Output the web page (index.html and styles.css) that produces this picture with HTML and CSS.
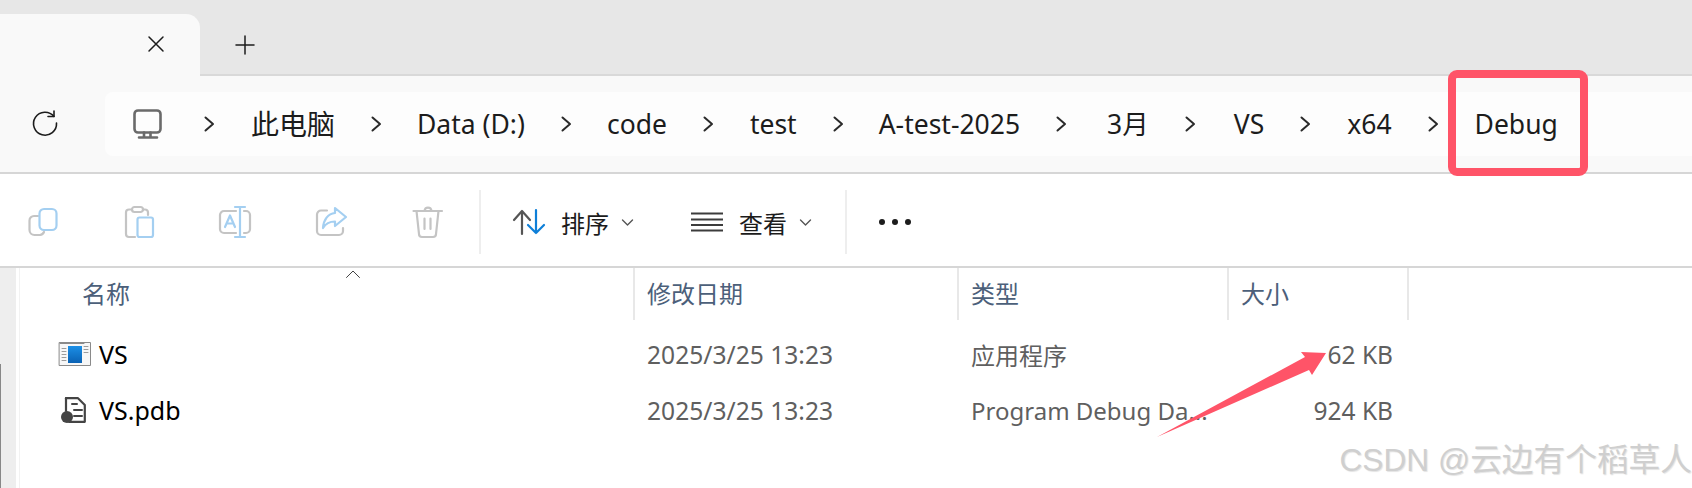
FILE: index.html
```html
<!DOCTYPE html>
<html lang="zh">
<head>
<meta charset="utf-8">
<title>Debug</title>
<link rel="stylesheet" href="styles.css">
</head>
<body>
<div class="window">
  <header class="tabstrip">
    <div class="tab">
      <svg class="ico-close" viewBox="0 0 16 16"><path d="M1 1 15 15M15 1 1 15"/></svg>
    </div>
    <svg class="ico-plus" viewBox="0 0 20 20"><path d="M10 1V19M1 10H19"/></svg>
  </header>
  <nav class="addressrow">
    <svg class="ico-refresh" viewBox="0 0 26 26"><path d="M22 6.500A11.500 11.500 0 1 0 24.500 13"/><path d="M22 1V6.500H16"/></svg>
    <div class="addressbar">
      <svg class="ico-pc" viewBox="0 0 30 30"><rect x="1.500" y="1.500" width="26" height="22" rx="3.500"/><path d="M11 23.500V28M17.500 23.500V28M6 28.500H24"/></svg>
      <svg class="chev" viewBox="0 0 11 16"><path d="M1.500 1.500 9 8 1.500 14.500"/></svg>
      <span class="cjk">此电脑</span>
      <svg class="chev" viewBox="0 0 11 16"><path d="M1.500 1.500 9 8 1.500 14.500"/></svg>
      <span class="back">Data (D:)</span>
      <svg class="chev" viewBox="0 0 11 16"><path d="M1.500 1.500 9 8 1.500 14.500"/></svg>
      <span class="back">code</span>
      <svg class="chev" viewBox="0 0 11 16"><path d="M1.500 1.500 9 8 1.500 14.500"/></svg>
      <span>test</span>
      <svg class="chev" viewBox="0 0 11 16"><path d="M1.500 1.500 9 8 1.500 14.500"/></svg>
      <span class="back">A-test-2025</span>
      <svg class="chev" viewBox="0 0 11 16"><path d="M1.500 1.500 9 8 1.500 14.500"/></svg>
      <span class="month">3月</span>
      <svg class="chev" viewBox="0 0 11 16"><path d="M1.500 1.500 9 8 1.500 14.500"/></svg>
      <span class="fwd">VS</span>
      <svg class="chev" viewBox="0 0 11 16"><path d="M1.500 1.500 9 8 1.500 14.500"/></svg>
      <span>x64</span>
      <svg class="chev" viewBox="0 0 11 16"><path d="M1.500 1.500 9 8 1.500 14.500"/></svg>
      <span>Debug</span>
    </div>
  </nav>
  <section class="toolbar">
    <div class="tools">
      <svg class="tool" viewBox="0 0 32 32"><path class="g" d="M12 10H8A4.500 4.500 0 0 0 3.500 14.500V24A5 5 0 0 0 8.500 29H14A5 5 0 0 0 18 26"/><rect class="b" x="13.500" y="3" width="17" height="21" rx="4.500"/></svg>
      <svg class="tool" viewBox="0 0 32 32"><path class="g" d="M10 3.500H7A3 3 0 0 0 4 6.500V28A3 3 0 0 0 7 31H13M26 9V6.500A3 3 0 0 0 23 3.500H21"/><rect class="g" x="10" y="1" width="11" height="5" rx="2.500"/><rect class="b" x="15.500" y="11.500" width="15.500" height="19.500" rx="2"/></svg>
      <svg class="tool" viewBox="0 0 32 32"><path class="g" d="M18 5H6A4 4 0 0 0 2 9V23A4 4 0 0 0 6 27H18M26 5H28A4 4 0 0 1 32 9V23A4 4 0 0 1 28 27H26"/><path class="b" d="M7 21 12 9.500 17 21M8.500 17.500H15.500M22 1V31M17 1H27M17 31H27"/></svg>
      <svg class="tool" viewBox="0 0 32 32"><path class="g" d="M13 4.500H7A4 4 0 0 0 3 8.500V25A4 4 0 0 0 7 29H25A4 4 0 0 0 29 25V22"/><path class="b" d="M21 2 32 11 21 20V15.500C16 15.500 12 17 9 22 9.500 14 14 7.500 21 7Z"/></svg>
      <svg class="tool" viewBox="0 0 32 32"><path class="g" d="M3.500 5H32M14.500 5C15 .5 21 .5 21.500 5M6.500 5 9 28A3 3 0 0 0 12 31H23A3 3 0 0 0 26 28L28.500 5M14.500 12.500V23M20.500 12.500V23"/></svg>
    </div>
    <div class="sep"></div>
    <div class="menu sort">
      <svg class="ico-sort" viewBox="0 0 32 24"><path class="d" d="M9 24V1M1 10 9 1 17 10"/><path class="s" d="M23 0V23M15 15 23 23 31 15"/></svg>
      <span>排序</span>
      <svg class="caret" viewBox="0 0 11 7"><path d="M.5 1 5.500 6 10.500 1"/></svg>
    </div>
    <div class="menu view">
      <svg class="ico-list" viewBox="0 0 32 20"><path d="M0 1.500H32M0 7.500H32M0 13H32M0 18.500H32"/></svg>
      <span>查看</span>
      <svg class="caret" viewBox="0 0 11 7"><path d="M.5 1 5.500 6 10.500 1"/></svg>
    </div>
    <div class="sep sep2"></div>
    <div class="more"><i></i><i></i><i></i></div>
  </section>
  <main class="content">
    <aside class="pane"></aside>
    <div class="list">
      <div class="row head">
        <div class="c name">名称<svg class="sortup" viewBox="0 0 14 8"><path d="M.5 7.500 7 1 13.500 7.500"/></svg></div>
        <div class="c date">修改日期</div>
        <div class="c type">类型</div>
        <div class="c size">大小</div>
      </div>
      <div class="row file first">
        <div class="c name">
          <svg class="ico-exe" viewBox="0 0 32 24"><defs><linearGradient id="exeBlue" x1="0" y1="0" x2="0" y2="1"><stop offset="0" stop-color="#1c8fe6"/><stop offset="1" stop-color="#0a62b4"/></linearGradient></defs><rect x=".5" y=".5" width="31" height="23" fill="#f7f7f7" stroke="#8a8a8a"/><path d="M1 1.500H25" stroke="#8a8a8a"/><rect x="9" y="4" width="14" height="17" fill="url(#exeBlue)"/><path d="M3 6.500H7M3 9.500H7M3 12.500H7M3 15.500H7M3 18.500H7M25 4.500H29M25 7.500H29M25 10.500H29" stroke="#9c9c9c"/></svg>
          <b>VS</b>
        </div>
        <div class="c date">2025/3/25 13:23</div>
        <div class="c type">应用程序</div>
        <div class="c size">62 KB</div>
      </div>
      <div class="row file">
        <div class="c name">
          <svg class="ico-pdb" viewBox="0 0 32 26"><path d="M7 1.200H19L25.800 8V24.800H10" stroke="#444" stroke-width="2.200"/><path d="M7 14V1.200" stroke="#444" stroke-width="2.200"/><path d="M13 7H18M15 13H23M15 19H23" stroke="#444" stroke-width="2"/><circle cx="8" cy="20" r="6" fill="#444"/></svg>
          <b>VS.pdb</b>
        </div>
        <div class="c date">2025/3/25 13:23</div>
        <div class="c type">Program Debug Da...</div>
        <div class="c size">924 KB</div>
      </div>
    </div>
  </main>
  <div class="redbox"></div>
  <svg class="arrow" viewBox="0 0 200 110"><path d="M7 97 155 17 151 12 176 13 162 35 159 30Z"/></svg>
  <div class="mark">CSDN @云边有个稻草人</div>
</div>
</body>
</html>
```
FILE: styles.css
```css
* { box-sizing: border-box; }
html, body { margin: 0; padding: 0; background: #fff; }
.window {
  position: relative; width: 1692px; height: 488px; overflow: hidden;
  font-family: "Noto Sans", "Noto Sans CJK SC", sans-serif;
  color: #1c1c1c;
}
svg { display: block; flex: none; fill: none; stroke-linecap: round; stroke-linejoin: round; overflow: visible; }

.tabstrip { height: 76px; background: #e7e7e7; border-bottom: 2px solid #d9d9d9; padding-top: 14px; display: flex; position: relative; }
.tab { width: 200px; height: 62px; background: #f9f9f9; border-radius: 0 14px 0 0; display: flex; align-items: flex-start; justify-content: flex-end; padding: 22px 36px 0 0; }
.ico-close { width: 16px; height: 16px; stroke: #1c1c1c; stroke-width: 1.5; }
.ico-plus { width: 20px; height: 20px; margin: 21px 0 0 35px; stroke: #1c1c1c; stroke-width: 1.5; }

.addressrow { height: 98px; background: #f9f9f9; border-bottom: 2px solid #d6d6d6; display: flex; align-items: flex-start; padding: 16px 0 0 32px; }
.ico-refresh { width: 26px; height: 26px; margin: 18px 47px 0 0; stroke: #1c1c1c; stroke-width: 1.6; }
.addressbar { flex: 1; height: 64px; background: #fdfdfd; border-radius: 8px 0 0 8px; display: flex; align-items: center; gap: 36px; padding-left: 28px; font-size: 26.5px; }
.addressbar span { white-space: nowrap; line-height: 36px; }
.addressbar .cjk { font-size: 28px; }
.addressbar .back { margin-left: -1px; }
.addressbar .month { margin-left: 4px; }
.addressbar .fwd { margin-left: 2px; }
.ico-pc { width: 30px; height: 30px; stroke: #6a6a6a; stroke-width: 2.6; margin-right: 5px; }
.chev { width: 11px; height: 16px; stroke: #2a2a2a; stroke-width: 2; }

.toolbar { height: 94px; background: #fff; border-bottom: 2px solid #d6d6d6; display: flex; align-items: center; padding: 4px 0 0 26px; }
.tools { display: flex; gap: 64px; }
.tool { width: 32px; height: 32px; stroke-width: 2.2; }
.tool .g { stroke: #c4c4c4; }
.tool .b { stroke: #a4cff1; }
.sep { width: 2px; height: 64px; background: #eee; margin-left: 37px; }
.menu { display: flex; align-items: center; font-size: 24px; }
.sort { margin-left: 32px; }
.ico-sort { width: 32px; height: 24px; stroke-width: 2.2; margin-right: 16px; }
.ico-sort .d { stroke: #555; }
.ico-sort .s { stroke: #0e7fd8; }
.caret { width: 11px; height: 7px; margin-left: 13px; stroke: #555; stroke-width: 1.4; }
.view { margin-left: 58px; }
.ico-list { width: 32px; height: 20px; stroke: #3c3c3c; stroke-width: 2; stroke-linecap: butt; margin-right: 16px; }
.sep2 { margin-left: 34px; }
.more { display: flex; gap: 7px; margin-left: 32px; }
.more i { width: 6px; height: 6px; border-radius: 50%; background: #1c1c1c; display: block; }

.content { display: flex; height: 220px; }
.pane { width: 20px; background: #eee; border-right: 4px solid #fff; position: relative; }
.pane::after { content: ""; position: absolute; left: 0; top: 96px; bottom: 0; width: 1px; background: #888; }
.pane::before { content: ""; position: absolute; left: 19px; top: 0; bottom: 0; width: 1px; background: #f2f2f2; }
.list { flex: 1; font-size: 25px; }
.row { display: grid; grid-template-columns: 615px 324px 270px 180px; align-items: center; }
.head { height: 52px; color: #4c607a; font-size: 24px; }
.head .c { height: 100%; display: flex; align-items: center; padding: 0 0 4px 12px; border-right: 2px solid #e8e8e8; }
.head .name { padding-left: 62px; position: relative; }
.sortup { position: absolute; left: 326px; top: 2px; width: 14px; height: 8px; stroke: #444; stroke-width: 1; }
.file { height: 56px; color: #5f5f5f; }
.first { margin-top: 6px; }
.file .c { padding-left: 12px; white-space: nowrap; }
.file .date { font-size: 24.6px; }
.file .type { font-size: 24px; }
.file .name { display: flex; align-items: center; padding-left: 39px; color: #000; gap: 8px; }
.file b { font-weight: 400; }
.file .size { text-align: right; padding: 0 16px 0 0; font-size: 24.5px; }
.ico-exe, .ico-pdb { width: 32px; height: 26px; }

.redbox { position: absolute; left: 1448px; top: 70px; width: 140px; height: 106px; border: 8px solid #ff5468; border-radius: 9px; }
.arrow { position: absolute; left: 1150px; top: 340px; width: 200px; height: 110px; fill: #ff5468; }
.mark { position: absolute; right: 0; top: 434px; font-family: "Liberation Sans", "Noto Sans CJK SC", sans-serif; font-size: 31.7px; color: #cfcfcf; text-shadow: 1px 1px 1px #e4e4e4; white-space: nowrap; }
```
